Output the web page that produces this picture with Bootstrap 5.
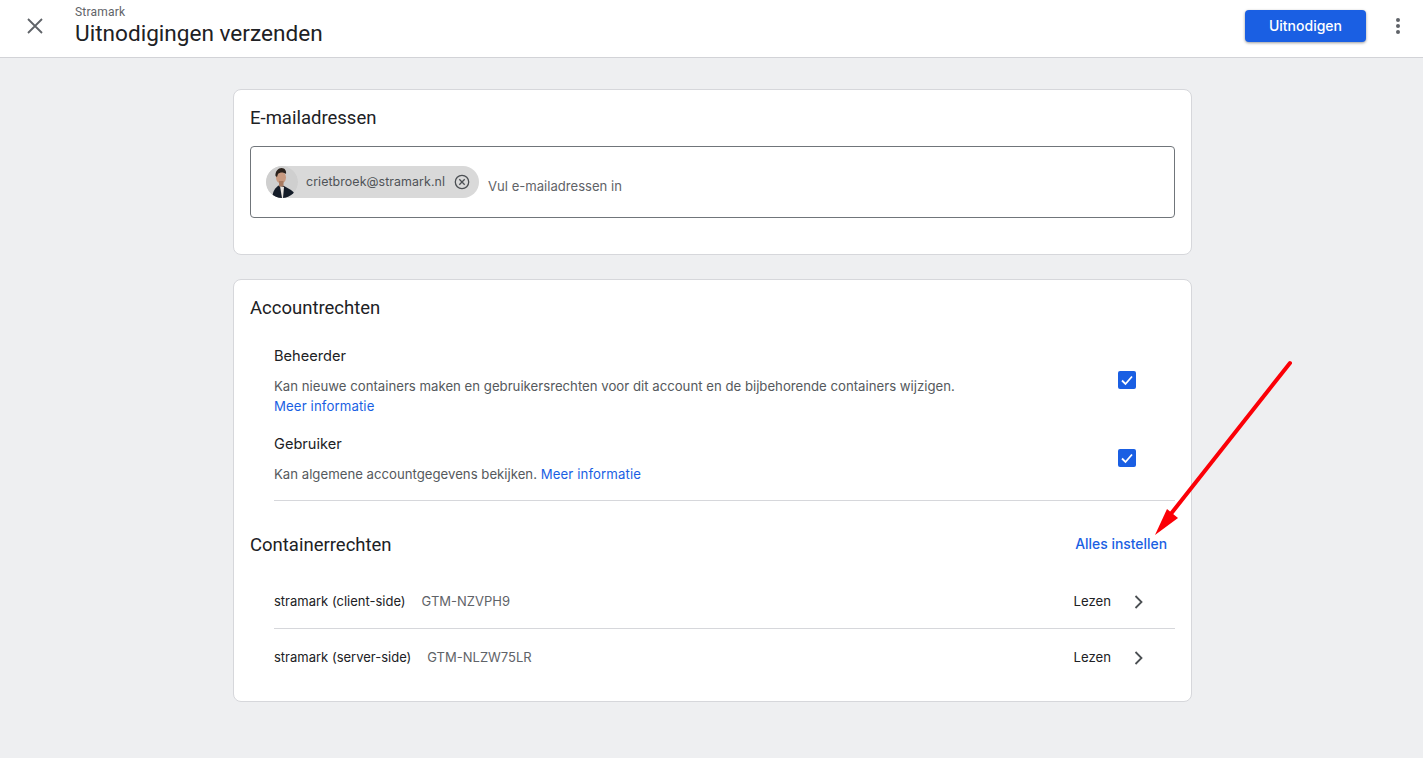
<!DOCTYPE html>
<html lang="nl">
<head>
    <meta charset="UTF-8">
    <title>Uitnodigingen verzenden</title>
    <link href="https://cdn.jsdelivr.net/npm/bootstrap@5.3.0/dist/css/bootstrap.min.css" rel="stylesheet">
    <style>
body {
    background: #eeeff1;
    color: #202124;
    font-family: "Inter", "Roboto", sans-serif;
    font-size: 13px;
    height: 758px;
    overflow: hidden;
}
.topbar {
    height: 58px;
    background: #fff;
    border-bottom: 1px solid #d2d3d7;
    padding: 0 23px 0 26px;
}
.close-ico { width: 18px; height: 18px; margin-right: 31px; margin-top: -6px; }
.top-sub { font-family: "Roboto", sans-serif; font-size: 12px; line-height: 14px; color: #5f6368; margin-top: 5px; letter-spacing: .2px; }
.top-title { font-family: "Roboto", sans-serif; font-size: 22.6px; line-height: 28px; color: #202124; margin-top: 1px; }
.invite-btn {
    width: 121px;
    height: 32px;
    background: #1a5fe3;
    color: #fff;
    font-size: 14px;
    font-weight: 500;
    border: 0;
    border-radius: 4px;
    box-shadow: 0 1px 3px rgba(0,0,0,.4);
    margin: -6px 30px 0 0;
    padding: 0;
}
.invite-btn:hover { background: #1a5fe3; color: #fff; }
.more-dots { width: 4px; margin-top: -6px; }
.more-dots i { display: block; width: 4px; height: 4px; border-radius: 50%; background: #5f6368; margin: 2px 0; }
.page-col { width: 959px; margin: 31px 0 0 233px; }
.panel {
    background: #fff;
    border: 1px solid #d6d7db;
    border-radius: 8px;
    padding: 0 16px;
}
.panel-email { height: 166px; margin-bottom: 24px; padding-top: 16px; }
.panel-rights { height: 423px; padding-top: 16px; }
.panel-head { font-family: "Roboto", sans-serif; font-size: 18.5px; line-height: 24px; color: #202124; }
.email-box {
    height: 72px;
    margin-top: 16px;
    border: 1px solid #70757a;
    border-radius: 4px;
    padding: 19px 15px 0;
}
.mail-chip {
    height: 32px;
    width: 213px;
    background: #d9d9d9;
    border-radius: 16px;
    color: #4f5357;
    font-size: 12.4px;
    font-weight: 400;
    letter-spacing: .08px;
}
.chip-face { width: 32px; height: 32px; border-radius: 50%; margin-right: 8px; }
.chip-x { width: 18px; height: 18px; margin-left: 8px; }
.mail-hint { color: #5f6368; font-size: 13.1px; margin-left: 9px; margin-top: 11px; }
.rights-list { padding-left: 24px; }
.rights-top { margin-top: 26px; }
.rights-next { margin-top: 18px; padding-bottom: 16px; }
.right-name { font-size: 14.6px; line-height: 20px; color: #202124; margin-bottom: 10px; }
.right-desc { color: #55595d; line-height: 20px; font-size: 13.2px; }
.blue-link { color: #1a5fe3; text-decoration: none; letter-spacing: .12px; }
.check-box { width: 18px; height: 18px; background: #1a5fe3; border-radius: 2px; margin: -2px 39px 0 0; }
.rule-line { border-top: 1px solid #d6d7db; }
.perm-head { margin-top: 32px; }
.perm-all { font-size: 13.9px; font-weight: 500; letter-spacing: 0; margin: 0 8px 2px 0; }
.perm-list { margin-top: 15px; }
.container-row { height: 56px; padding-top: 2px; }
.perm-list .container-row:first-child { padding-top: 4px; }
.row-name { color: #202124; font-size: 13px; margin-right: 16px; }
.row-id { color: #5f6368; font-size: 13px; }
.row-read { color: #202124; font-size: 13.2px; }
.row-chev { width: 16px; height: 16px; margin: 0 28px 0 20px; }
.arrow-layer { position: absolute; left: 0; top: 0; width: 1423px; height: 758px; pointer-events: none; }
    </style>
</head>
<body>
    <header class="topbar d-flex align-items-center">
        <svg class="close-ico" viewBox="0 0 18 18"><path d="M2 2 16 16M16 2 2 16" stroke="#5f6368" stroke-width="1.800" fill="none"/></svg>
        <div class="flex-grow-1 align-self-start">
            <div class="top-sub">Stramark</div>
            <div class="top-title">Uitnodigingen verzenden</div>
        </div>
        <button class="btn invite-btn" type="button">Uitnodigen</button>
        <div class="more-dots"><i></i><i></i><i></i></div>
    </header>

    <main class="page-col">
        <section class="panel panel-email">
            <div class="panel-head">E-mailadressen</div>
            <div class="email-box d-flex align-items-start">
                <div class="mail-chip d-flex align-items-center">
                    <svg class="chip-face" viewBox="0 0 32 32">
                        <circle cx="16" cy="16" r="16" fill="#cfcfcf"/>
                        <path d="M6 32c1-7 3-11 8-13l4 1 7 4c3 2 5 5 6 8z" fill="#141c28"/>
                        <path d="M14 20l2 12h1l1-11z" fill="#e8e4e0"/>
                        <ellipse cx="15" cy="11.500" rx="5" ry="6" fill="#c99a80"/>
                        <rect x="13" y="15" width="4.500" height="5.500" fill="#a87a60"/>
                        <path d="M9.500 10c-.5-5 3-8 6-8 3.500 0 5 3 4.500 6-2.500-2-6-2-8 0l-1 3z" fill="#2a211c"/>
                    </svg>
                    <span class="text-nowrap">crietbroek@stramark.nl</span>
                    <svg class="chip-x" viewBox="0 0 18 18"><circle cx="9" cy="9" r="6.700" fill="none" stroke="#4b4f53" stroke-width="1.300"/><path d="M6.300 6.300 11.700 11.700M11.700 6.300 6.300 11.700" stroke="#4b4f53" stroke-width="1.300"/></svg>
                </div>
                <span class="mail-hint">Vul e-mailadressen in</span>
            </div>
        </section>

        <section class="panel panel-rights">
            <div class="panel-head">Accountrechten</div>
            <div class="rights-list">
                <div class="d-flex align-items-center rights-top">
                    <div class="flex-grow-1">
                        <div class="right-name">Beheerder</div>
                        <div class="right-desc">Kan nieuwe containers maken en gebruikersrechten voor dit account en de bijbehorende containers wijzigen.<br><a href="#" class="blue-link">Meer informatie</a></div>
                    </div>
                    <svg class="check-box" viewBox="0 0 18 18"><path d="M4 9.500 7.500 13 14 5.500" stroke="#fff" stroke-width="1.800" fill="none"/></svg>
                </div>
                <div class="d-flex align-items-center rights-next">
                    <div class="flex-grow-1">
                        <div class="right-name">Gebruiker</div>
                        <div class="right-desc">Kan algemene accountgegevens bekijken. <a href="#" class="blue-link">Meer informatie</a></div>
                    </div>
                    <svg class="check-box" viewBox="0 0 18 18"><path d="M4 9.500 7.500 13 14 5.500" stroke="#fff" stroke-width="1.800" fill="none"/></svg>
                </div>
                <div class="rule-line"></div>
            </div>
            <div class="d-flex justify-content-between align-items-center perm-head">
                <div class="panel-head">Containerrechten</div>
                <a href="#" class="blue-link perm-all">Alles instellen</a>
            </div>
            <div class="rights-list perm-list">
                <div class="container-row d-flex align-items-center">
                    <span class="row-name">stramark (client-side)</span>
                    <span class="row-id flex-grow-1">GTM-NZVPH9</span>
                    <span class="row-read">Lezen</span>
                    <svg class="row-chev" viewBox="0 0 16 16"><path d="M4.500 2 10.500 8 4.500 14" stroke="#4b4f53" stroke-width="1.800" fill="none"/></svg>
                </div>
                <div class="rule-line"></div>
                <div class="container-row d-flex align-items-center">
                    <span class="row-name">stramark (server-side)</span>
                    <span class="row-id flex-grow-1">GTM-NLZW75LR</span>
                    <span class="row-read">Lezen</span>
                    <svg class="row-chev" viewBox="0 0 16 16"><path d="M4.500 2 10.500 8 4.500 14" stroke="#4b4f53" stroke-width="1.800" fill="none"/></svg>
                </div>
            </div>
        </section>
    </main>

    <svg class="arrow-layer" viewBox="0 0 1423 758">
        <path d="M1290 363 1170 515" stroke="#fb0007" stroke-width="4" stroke-linecap="round" fill="none"/>
        <path d="M1155 535 1167 509 1178 518z" fill="#fb0007"/>
    </svg>
    <script src="https://cdn.jsdelivr.net/npm/bootstrap@5.3.0/dist/js/bootstrap.bundle.min.js"></script>
</body>
</html>
